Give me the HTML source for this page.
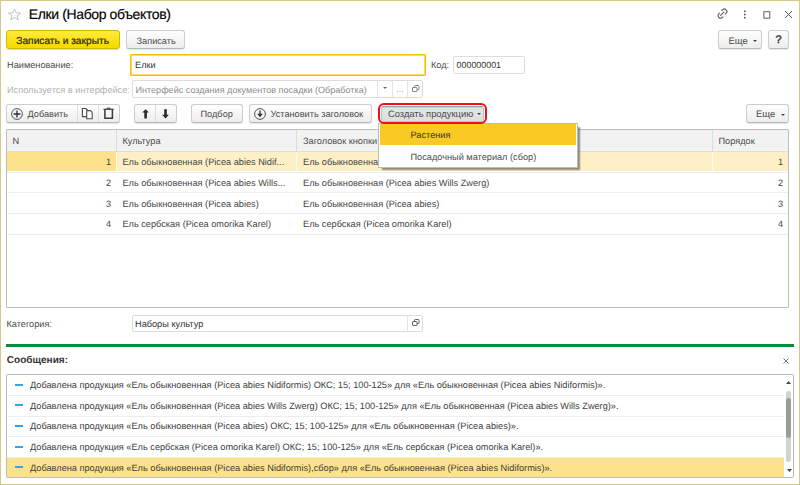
<!DOCTYPE html>
<html><head><meta charset="utf-8">
<style>
*{box-sizing:border-box;margin:0;padding:0}
html,body{width:800px;height:485px;overflow:hidden;background:#fff}
body{font-family:"Liberation Sans",sans-serif;font-size:9.2px;color:#4a4a4a;position:relative;text-rendering:geometricPrecision}
.a{position:absolute;white-space:nowrap;line-height:12px}
.frame{position:absolute;left:0;top:0;width:800px;height:485px;border:1px solid #d4c98a}
.btn{position:absolute;border:1px solid #cdcdcd;border-bottom-color:#b8b8b8;border-radius:3px;background:linear-gradient(#fefefe,#ededed);box-shadow:0 1px 1px rgba(0,0,0,.10)}
.ybtn{position:absolute;border:1px solid #d8b400;border-radius:3px;background:linear-gradient(#ffeb3a,#f8d800);box-shadow:0 1px 1px rgba(0,0,0,.15)}
.inp{position:absolute;border:1px solid #dcdcdc;border-radius:2px;background:#fff}
.sep{position:absolute;top:0;bottom:0;width:1px;background:#d4d4d4}
.hl{position:absolute}
svg{position:absolute;overflow:visible}
</style></head><body>
<div class="frame"></div>

<!-- title bar -->
<svg style="left:8px;top:8px" width="13" height="13" viewBox="0 0 13 13"><path d="M6.5 1 L8.1 4.9 L12.6 5.1 L9 7.8 L10.3 11.9 L6.5 9.4 L2.7 11.9 L4 7.8 L0.4 5.1 L4.9 4.9 Z" fill="none" stroke="#bfc3c8" stroke-width="1" stroke-linejoin="round"/></svg>
<div class="a" style="left:28.8px;top:5.6px;font-size:14px;line-height:16px;letter-spacing:-0.38px;color:#000;-webkit-text-stroke:0.15px #000">Елки (Набор объектов)</div>

<!-- window icons -->
<svg style="left:717px;top:8px" width="12" height="12" viewBox="0 0 12 12"><g fill="none" stroke="#666" stroke-width="1.15" stroke-linecap="round"><path d="M4.8 2.5 L5.6 1.8 A2.45 2.45 0 0 1 9.1 5.3 L8.3 6.2"/><path d="M2.5 5.2 L1.8 6.0 A2.45 2.45 0 0 0 5.3 9.5 L6 8.8"/><path d="M3.6 7.4 L6.9 4.1"/></g></svg>
<svg style="left:743px;top:10px" width="4" height="9" viewBox="0 0 4 9"><g fill="#555"><rect x="1" y="0.5" width="1.6" height="1.6"/><rect x="1" y="3.7" width="1.6" height="1.6"/><rect x="1" y="6.9" width="1.6" height="1.6"/></g></svg>
<svg style="left:763px;top:10.5px" width="8" height="8" viewBox="0 0 8 8"><rect x="0.9" y="0.75" width="5.9" height="6.4" fill="none" stroke="#555" stroke-width="0.95"/></svg>
<svg style="left:784px;top:10px" width="9" height="9" viewBox="0 0 9 9"><path d="M1 1 L8 8 M8 1 L1 8" stroke="#555" stroke-width="1"/></svg>

<!-- command bar -->
<div class="ybtn" style="left:6px;top:30px;width:114px;height:19px"></div>
<div class="a" style="left:16.3px;top:35.7px;font-size:10.2px;color:#2a2a2a;-webkit-text-stroke:0.22px #2a2a2a">Записать и закрыть</div>
<div class="btn" style="left:126px;top:30px;width:59px;height:19px"></div>
<div class="a" style="left:136.5px;top:35px">Записать</div>

<div class="btn" style="left:718px;top:30px;width:44px;height:19px"></div>
<div class="a" style="left:728.5px;top:35.5px;font-size:9.5px">Еще</div>
<svg style="left:752.7px;top:39.6px" width="4" height="2" viewBox="0 0 4 2"><path d="M0 0 L4 0 L2 2 Z" fill="#444"/></svg>
<div class="btn" style="left:768px;top:30px;width:21px;height:19px"></div>
<div class="a" style="left:775.6px;top:34.2px;font-size:11px;color:#222;-webkit-text-stroke:0.35px #222">?</div>

<!-- Наименование -->
<div class="a" style="left:7px;top:59px">Наименование:</div>
<div class="inp" style="left:130px;top:54px;width:296px;height:22px;border:1px solid #f6c000;border-radius:1px;box-shadow:inset 0 0 0 1px #fbd96a"></div>
<div class="a" style="left:135px;top:59px;color:#333">Елки</div>
<div class="a" style="left:431px;top:59px">Код:</div>
<div class="inp" style="left:453px;top:56px;width:72px;height:18px"></div>
<div class="a" style="left:456.6px;top:59px;color:#333;font-size:8.9px">000000001</div>

<!-- Используется -->
<div class="a" style="left:7px;top:83.8px;color:#b0b0b0">Используется в интерфейсе:</div>
<div class="inp" style="left:132px;top:80px;width:291px;height:18px"></div>
<div class="a" style="left:135.5px;top:83.8px;color:#8c8c8c;font-size:9.07px">Интерфейс создания документов посадки (Обработка)</div>


<!-- toolbar -->
<div class="btn" style="left:6px;top:104px;width:114px;height:19px"></div>
<div class="sep" style="left:77px;top:105px;height:17px;bottom:auto;background:#dedede"></div>
<div class="sep" style="left:98px;top:105px;height:17px;bottom:auto;background:#dedede"></div>
<svg style="left:11px;top:107.7px" width="12" height="12" viewBox="0 0 12 12"><circle cx="6" cy="6" r="5.4" fill="none" stroke="#555" stroke-width="1"/><path d="M6 2.6 V9.4 M2.6 6 H9.4" stroke="#2e2e2e" stroke-width="1.35"/></svg>
<div class="a" style="left:27.5px;top:107.5px">Добавить</div>
<svg style="left:80px;top:107px" width="14" height="13" viewBox="0 0 14 13"><g fill="#fff" stroke="#4a4a4a" stroke-width="1.1" stroke-linejoin="round"><path d="M2.4 1.5 H5.8 L7.4 3.1 V9.6 H2.4 Z"/><path d="M6.7 3.6 H10.4 L12.2 5.4 V11.7 H6.7 Z"/></g></svg>
<svg style="left:102px;top:107px" width="13" height="13" viewBox="0 0 13 13"><g fill="none" stroke="#3a3a3a"><path d="M1.4 2.3 H11.7" stroke-width="1.2"/><path d="M2.9 2.8 V11.2 H10.4 V2.8" stroke-width="1.5"/><path d="M4.6 1.4 Q6.5 0.6 8.4 1.4" stroke-width="1.1"/></g></svg>

<div class="btn" style="left:134px;top:104px;width:43px;height:19px"></div>
<div class="sep" style="left:155px;top:105px;height:17px;bottom:auto;background:#dedede"></div>
<svg style="left:141.5px;top:108.5px" width="8" height="10" viewBox="0 0 8 10"><path d="M3.6 0.2 L6.9 3.6 H4.9 V9.5 H2.3 V3.6 H0.3 Z" fill="#2a2a2a"/></svg>
<svg style="left:162px;top:108.5px" width="8" height="10" viewBox="0 0 8 10"><path d="M3.5 9.5 L6.9 5.8 H4.8 V0.2 H2.2 V5.8 H0.1 Z" fill="#2a2a2a"/></svg>

<div class="btn" style="left:191px;top:104px;width:52px;height:19px"></div>
<div class="a" style="left:200.5px;top:108.1px">Подбор</div>

<div class="btn" style="left:249px;top:104px;width:123px;height:19px"></div>
<svg style="left:254px;top:107.7px" width="12" height="12" viewBox="0 0 12 12"><circle cx="6" cy="6" r="5.4" fill="none" stroke="#555" stroke-width="1"/><path d="M6 2.4 V6.5" stroke="#2e2e2e" stroke-width="1.3"/><path d="M3.2 5.8 L8.8 5.8 L6 9.2 Z" fill="#2e2e2e"/></svg>
<div class="a" style="left:270.5px;top:107.5px">Установить заголовок</div>

<div class="btn" style="left:380.5px;top:105.5px;width:103.5px;height:16px;background:linear-gradient(#e6e6e6,#dedede);border-color:#c4c4c4;border-top-color:#a0a0a0;border-radius:2px;box-shadow:inset 0 1px 1px rgba(0,0,0,.10)"></div>
<div class="a" style="left:388px;top:107.8px;font-size:9.35px">Создать продукцию</div>
<svg style="left:477.2px;top:113.4px" width="4" height="2" viewBox="0 0 4 2"><path d="M0 0 L4 0 L2 2 Z" fill="#444"/></svg>

<div class="btn" style="left:746px;top:104px;width:43px;height:19px"></div>
<div class="a" style="left:756px;top:109.1px;font-size:9.5px">Еще</div>
<svg style="left:780.5px;top:113.5px" width="4" height="2" viewBox="0 0 4 2"><path d="M0 0 L4 0 L2 2 Z" fill="#444"/></svg>

<!-- table -->
<div class="a" style="left:6px;top:129px;width:783px;height:179px;border:1px solid #bdbdbd;border-radius:1px;background:#fff"></div>
<div class="hl" style="left:7px;top:130px;width:781px;height:20px;background:#f2f2f2"></div>
<div class="hl" style="left:7px;top:150px;width:781px;height:1px;background:#f6f6f6"></div>
<div class="hl" style="left:7px;top:151px;width:781px;height:1px;background:#dcdde2"></div>
<div class="sep" style="left:116px;top:130px;height:21px;bottom:auto;background:#dcdcdc"></div>
<div class="sep" style="left:296px;top:130px;height:21px;bottom:auto;background:#dcdcdc"></div>
<div class="sep" style="left:712px;top:130px;height:21px;bottom:auto;background:#dcdcdc"></div>
<div class="a" style="left:12.5px;top:134.7px">N</div>
<div class="a" style="left:122.4px;top:134.7px">Культура</div>
<div class="a" style="left:303px;top:134.7px">Заголовок кнопки</div>
<div class="a" style="left:718.5px;top:134.7px">Порядок</div>

<div class="hl" style="left:7px;top:152px;width:781px;height:19px;background:#fef9ea"></div>
<div class="hl" style="left:7px;top:152px;width:109px;height:19px;background:#fde28c"></div>
<div class="hl" style="left:117px;top:152px;width:179px;height:19px;background:#fdf0c6"></div>
<div class="hl" style="left:297px;top:152px;width:415px;height:19px;background:#fdf0c6"></div>
<div class="hl" style="left:713px;top:152px;width:75px;height:19px;background:#fdf0c6"></div>
<div class="hl" style="left:7px;top:172px;width:781px;height:1px;background:#ececec"></div>
<div class="hl" style="left:7px;top:192px;width:781px;height:1px;background:#ececec"></div>
<div class="hl" style="left:7px;top:213px;width:781px;height:1px;background:#ececec"></div>
<div class="hl" style="left:7px;top:234px;width:781px;height:1px;background:#ececec"></div>

<div class="a" style="left:104px;top:155.7px;width:7px;text-align:right;color:#444">1</div>
<div class="a" style="left:122.4px;top:155.7px;color:#444">Ель обыкновенная (Picea abies Nidif...</div>
<div class="a" style="left:303px;top:155.7px;color:#444">Ель обыкновенная (Picea abies Nidiformis)</div>
<div class="a" style="left:770px;top:155.7px;width:13px;text-align:right;color:#444">1</div>

<div class="a" style="left:104px;top:176.9px;width:7px;text-align:right;color:#444">2</div>
<div class="a" style="left:122.4px;top:176.9px;color:#444">Ель обыкновенная (Picea abies Wills...</div>
<div class="a" style="left:303px;top:176.9px;color:#444">Ель обыкновенная (Picea abies Wills Zwerg)</div>
<div class="a" style="left:770px;top:176.9px;width:13px;text-align:right;color:#444">2</div>

<div class="a" style="left:104px;top:197.6px;width:7px;text-align:right;color:#444">3</div>
<div class="a" style="left:122.4px;top:197.6px;color:#444">Ель обыкновенная (Picea abies)</div>
<div class="a" style="left:303px;top:197.6px;color:#444">Ель обыкновенная (Picea abies)</div>
<div class="a" style="left:770px;top:197.6px;width:13px;text-align:right;color:#444">3</div>

<div class="a" style="left:104px;top:218.2px;width:7px;text-align:right;color:#444">4</div>
<div class="a" style="left:122.4px;top:218.2px;color:#444">Ель сербская (Picea omorika Karel)</div>
<div class="a" style="left:303px;top:218.2px;color:#444">Ель сербская (Picea omorika Karel)</div>
<div class="a" style="left:770px;top:218.2px;width:13px;text-align:right;color:#444">4</div>

<!-- dropdown menu -->
<div class="a" style="left:378px;top:123px;width:200px;height:44.5px;border:1px solid #bcbcbc;background:#fff;box-shadow:3px 3px 1.5px -1px rgba(0,0,0,.42)"></div>
<div class="hl" style="left:380px;top:124px;width:196px;height:20.6px;background:#f9c924"></div>
<div class="a" style="left:410.5px;top:129.3px;color:#333">Растения</div>
<div class="a" style="left:410.5px;top:150.8px">Посадочный материал (сбор)</div>

<!-- Категория -->
<div class="a" style="left:6.5px;top:318px">Категория:</div>
<div class="inp" style="left:132px;top:314.5px;width:291px;height:17.5px"></div>
<div class="sep" style="left:407px;top:315px;height:16px;bottom:auto;background:#e4e4e4"></div>
<div class="a" style="left:135px;top:318px;color:#333">Наборы культур</div>
<svg style="left:411px;top:318px" width="9" height="9" viewBox="0 0 9 9"><g fill="#fff" stroke="#5e5e5e" stroke-width="0.95"><rect x="3.5" y="1.5" width="4.5" height="4" rx="0.8"/><rect x="1.5" y="3.5" width="4.5" height="4" rx="0.5"/></g></svg>

<!-- input buttons Используется -->
<div class="sep" style="left:377px;top:81px;height:16px;bottom:auto;background:#e4e4e4"></div>
<div class="sep" style="left:392px;top:81px;height:16px;bottom:auto;background:#e4e4e4"></div>
<div class="sep" style="left:407px;top:81px;height:16px;bottom:auto;background:#e4e4e4"></div>
<svg style="left:383.2px;top:87px" width="4" height="2" viewBox="0 0 4 2"><path d="M0 0 L4 0 L2 2 Z" fill="#666"/></svg>
<svg style="left:397px;top:91px" width="7" height="1" viewBox="0 0 7 1"><g fill="#aaa"><rect x="0" y="0" width="1" height="1"/><rect x="2.5" y="0" width="1" height="1"/><rect x="5" y="0" width="1" height="1"/></g></svg>
<svg style="left:411px;top:84px" width="9" height="9" viewBox="0 0 9 9"><g fill="#fff" stroke="#7a7a7a" stroke-width="0.95"><rect x="3.5" y="1.5" width="4.5" height="4" rx="0.8"/><rect x="1.5" y="3.5" width="4.5" height="4" rx="0.5"/></g></svg>

<!-- green line -->
<div class="hl" style="left:6px;top:344px;width:788px;height:3px;background:#068d3b"></div>

<!-- messages -->
<div class="a" style="left:6.8px;top:355.1px;font-weight:bold;font-size:10.05px;color:#333">Сообщения:</div>
<svg style="left:783px;top:358px" width="6" height="6" viewBox="0 0 6 6"><path d="M0.5 0.5 L5.5 5.5 M5.5 0.5 L0.5 5.5" stroke="#666" stroke-width="0.85"/></svg>
<div class="a" style="left:6px;top:374px;width:788px;height:104px;border:1px solid #bdbdbd;border-radius:2px;background:#fff"></div>
<div class="hl" style="left:7px;top:395px;width:777px;height:1px;background:#ececec"></div>
<div class="hl" style="left:7px;top:415.5px;width:777px;height:1px;background:#ececec"></div>
<div class="hl" style="left:7px;top:436px;width:777px;height:1px;background:#ececec"></div>
<div class="hl" style="left:7px;top:457px;width:777px;height:1px;background:#ececec"></div>
<div class="hl" style="left:7px;top:458px;width:776.5px;height:18.5px;background:#fde28c"></div>
<div class="hl" style="left:15px;top:384px;width:8px;height:2px;background:#33a6e6"></div>
<div class="a" style="left:30px;top:378.9px;color:#3d3d3d">Добавлена продукция «Ель обыкновенная (Picea abies Nidiformis) ОКС; 15; 100-125» для «Ель обыкновенная (Picea abies Nidiformis)».</div>
<div class="hl" style="left:15px;top:404px;width:8px;height:2px;background:#33a6e6"></div>
<div class="a" style="left:30px;top:399.5px;color:#3d3d3d">Добавлена продукция «Ель обыкновенная (Picea abies Wills Zwerg) ОКС; 15; 100-125» для «Ель обыкновенная (Picea abies Wills Zwerg)».</div>
<div class="hl" style="left:15px;top:425px;width:8px;height:2px;background:#33a6e6"></div>
<div class="a" style="left:30px;top:420.2px;color:#3d3d3d">Добавлена продукция «Ель обыкновенная (Picea abies) ОКС; 15; 100-125» для «Ель обыкновенная (Picea abies)».</div>
<div class="hl" style="left:15px;top:446px;width:8px;height:2px;background:#33a6e6"></div>
<div class="a" style="left:30px;top:440.8px;color:#3d3d3d">Добавлена продукция «Ель сербская (Picea omorika Karel) ОКС; 15; 100-125» для «Ель сербская (Picea omorika Karel)».</div>
<div class="hl" style="left:15px;top:466px;width:8px;height:2px;background:#33a6e6"></div>
<div class="a" style="left:30px;top:461.5px;color:#3d3d3d">Добавлена продукция «Ель обыкновенная (Picea abies Nidiformis),сбор» для «Ель обыкновенная (Picea abies Nidiformis)».</div>

<!-- scrollbar -->
<svg style="left:786px;top:381px" width="5" height="3" viewBox="0 0 5 3"><path d="M0 3 L5 3 L2.5 0 Z" fill="#444"/></svg>
<div class="hl" style="left:786.3px;top:391px;width:5px;height:70.5px;background:#d2d2d2;border-radius:3px"></div>
<div class="hl" style="left:786.3px;top:398px;width:5px;height:39.5px;background:#9c9c9c;border-radius:3px"></div>
<svg style="left:786.5px;top:468.5px" width="5" height="3" viewBox="0 0 5 3"><path d="M0 0 L5 0 L2.5 3 Z" fill="#444"/></svg>
<div class="a" style="left:377.6px;top:102.8px;width:109.4px;height:21px;border:2px solid #f0101a;border-radius:6px"></div>
</body></html>
